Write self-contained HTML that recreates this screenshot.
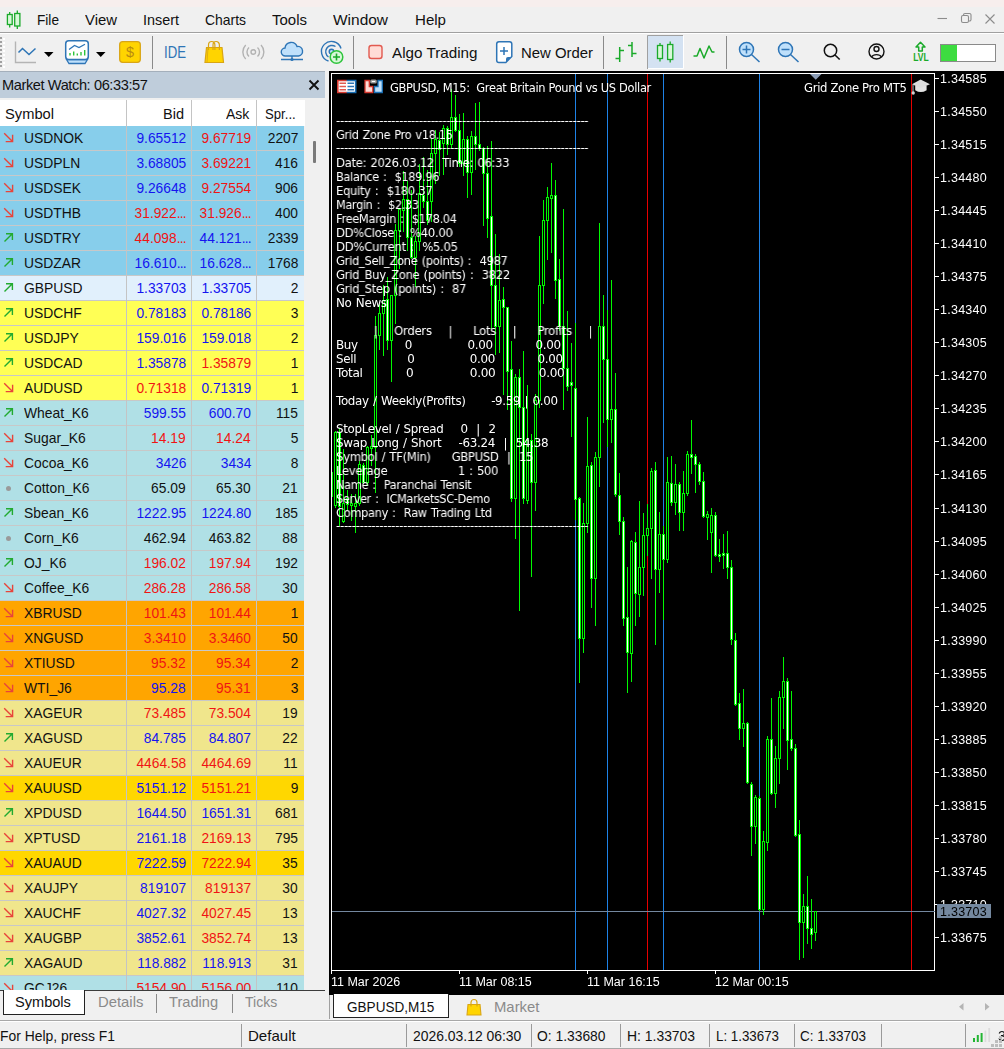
<!DOCTYPE html>
<html><head><meta charset="utf-8"><title>MetaTrader 5</title>
<style>
*{box-sizing:border-box;margin:0;padding:0}
html,body{width:1004px;height:1049px;overflow:hidden;background:#f0f0f0;font-family:"Liberation Sans",sans-serif;color:#000}
.a{position:absolute}
.t{position:absolute;white-space:nowrap;font-size:14.5px;letter-spacing:-0.4px;line-height:20px;color:#111}
#top{left:0;top:0;width:1004px;height:7px;background:#f7eeed}
#menusep{left:0;top:32px;width:1004px;height:1px;background:#a0a0a0}
#menusep2{left:0;top:33px;width:1004px;height:1px;background:#fff}
.mi{top:10px;font-size:15px;letter-spacing:0}
.vsep{position:absolute;width:1px;background:#8a8a8a}
#mwh{left:0;top:71px;width:325px;height:27px;background:#bfcddb;border-top:1px solid #a4afbb}
#mwhead{left:0;top:100px;width:305px;height:26px;background:#fff}
#mw{left:0;top:126px;width:304px;height:864px;overflow:hidden;background:#fff}
.r{position:absolute;left:0;width:304px;height:25px;font-size:15px;line-height:24px;border-bottom:1px solid #c8c8c8}
.r span{position:absolute;top:0;white-space:nowrap}
.r .s{left:24px;color:#111;transform:scaleX(.925);transform-origin:0 0}
.r .b{right:118px;text-align:right;transform:scaleX(.918);transform-origin:100% 0}
.r .k{right:53px;text-align:right;transform:scaleX(.918);transform-origin:100% 0}
.r .p{right:6px;text-align:right;color:#111;transform:scaleX(.918);transform-origin:100% 0}
.r i{font-style:normal;letter-spacing:-0.9px}
.cl{position:absolute;top:0;width:1px;height:100%;background:#c4c4c4}
.blue{color:#1414f0}.red{color:#f01414}.blk{color:#111}

#chart{left:329px;top:71px;width:675px;height:924px;background:#000;overflow:hidden}
#chart .ct,#chart .pa,#chart .ta{will-change:transform}
.ct{position:absolute;white-space:pre;color:#fff;font-family:"DejaVu Sans","Liberation Sans",sans-serif;font-size:11.850px;line-height:14px;letter-spacing:-0.320px;word-spacing:0.800px}
.pa{position:absolute;left:611px;color:#fff;font-family:"Liberation Sans",sans-serif;font-size:12.500px;line-height:14px;white-space:nowrap;letter-spacing:0.250px}
  .ta{position:absolute;top:904px;color:#fff;font-family:"Liberation Sans",sans-serif;font-size:12.500px;line-height:14px;white-space:nowrap}

.tab{position:absolute;font-size:15px;line-height:20px;white-space:nowrap}
</style></head>
<body>
<div id="top" class="a"></div>
<div class="t mi" style="left:36.5px;top:10px;;transform:scaleX(0.9101);transform-origin:0 0">File</div>
<div class="t mi" style="left:85px;top:10px;;transform:scaleX(0.9922);transform-origin:0 0">View</div>
<div class="t mi" style="left:143px;top:10px;;transform:scaleX(0.9596);transform-origin:0 0">Insert</div>
<div class="t mi" style="left:205px;top:10px;;transform:scaleX(0.9279);transform-origin:0 0">Charts</div>
<div class="t mi" style="left:272px;top:10px;;transform:scaleX(0.9991);transform-origin:0 0">Tools</div>
<div class="t mi" style="left:333px;top:10px;;transform:scaleX(1.0307);transform-origin:0 0">Window</div>
<div class="t mi" style="left:414.5px;top:10px;;transform:scaleX(1.0046);transform-origin:0 0">Help</div>
<div id="menusep" class="a"></div><div id="menusep2" class="a"></div>
<div id="mwh" class="a"></div>
<div class="t" style="left:2px;top:75px;;transform:scaleX(1.0062);transform-origin:0 0">Market Watch: 06:33:57</div>
<div id="mwhead" class="a"></div>
<div class="t mi" style="left:5px;top:104px;;transform:scaleX(0.9794);transform-origin:0 0">Symbol</div>
<div class="t mi" style="left:162.5px;top:104px;;transform:scaleX(0.9683);transform-origin:0 0">Bid</div>
<div class="t mi" style="left:226.2px;top:104px;;transform:scaleX(0.9354);transform-origin:0 0">Ask</div>
<div class="t mi" style="left:265.3px;top:104px;;transform:scaleX(0.8764);transform-origin:0 0">Spr...</div>
<div class="a" style="left:126px;top:100px;width:1px;height:26px;background:#c4c4c4"></div>
<div class="a" style="left:191px;top:100px;width:1px;height:26px;background:#c4c4c4"></div>
<div class="a" style="left:256px;top:100px;width:1px;height:26px;background:#c4c4c4"></div>
<div id="mw" class="a">
<div class="r" style="top:0px;background:#87ceeb"><svg class="a" style="left:3px;top:6px" width="12" height="12" viewBox="0 0 12 12"><path d="M1.200 1.200L9.500 9.500M2.700 9.600H9.600V2.700" fill="none" stroke="#e8443a" stroke-width="1.400"/></svg><span class="s">USDNOK</span><span class="b blue">9.65512</span><span class="k red">9.67719</span><span class="p">2207</span></div>
<div class="r" style="top:25px;background:#87ceeb"><svg class="a" style="left:3px;top:6px" width="12" height="12" viewBox="0 0 12 12"><path d="M1.200 1.200L9.500 9.500M2.700 9.600H9.600V2.700" fill="none" stroke="#e8443a" stroke-width="1.400"/></svg><span class="s">USDPLN</span><span class="b blue">3.68805</span><span class="k red">3.69221</span><span class="p">416</span></div>
<div class="r" style="top:50px;background:#87ceeb"><svg class="a" style="left:3px;top:6px" width="12" height="12" viewBox="0 0 12 12"><path d="M1.200 1.200L9.500 9.500M2.700 9.600H9.600V2.700" fill="none" stroke="#e8443a" stroke-width="1.400"/></svg><span class="s">USDSEK</span><span class="b blue">9.26648</span><span class="k red">9.27554</span><span class="p">906</span></div>
<div class="r" style="top:75px;background:#87ceeb"><svg class="a" style="left:3px;top:6px" width="12" height="12" viewBox="0 0 12 12"><path d="M1.200 1.200L9.500 9.500M2.700 9.600H9.600V2.700" fill="none" stroke="#e8443a" stroke-width="1.400"/></svg><span class="s">USDTHB</span><span class="b red">31.922<i>...</i></span><span class="k red">31.926<i>...</i></span><span class="p">400</span></div>
<div class="r" style="top:100px;background:#87ceeb"><svg class="a" style="left:3px;top:6px" width="12" height="12" viewBox="0 0 12 12"><path d="M1.500 9.500L9.300 1.700M3 1.700H9.400V8" fill="none" stroke="#22aa30" stroke-width="1.400"/></svg><span class="s">USDTRY</span><span class="b red">44.098<i>...</i></span><span class="k blue">44.121<i>...</i></span><span class="p">2339</span></div>
<div class="r" style="top:125px;background:#87ceeb"><svg class="a" style="left:3px;top:6px" width="12" height="12" viewBox="0 0 12 12"><path d="M1.500 9.500L9.300 1.700M3 1.700H9.400V8" fill="none" stroke="#22aa30" stroke-width="1.400"/></svg><span class="s">USDZAR</span><span class="b blue">16.610<i>...</i></span><span class="k blue">16.628<i>...</i></span><span class="p">1768</span></div>
<div class="r" style="top:150px;background:#e1f0fc"><svg class="a" style="left:3px;top:6px" width="12" height="12" viewBox="0 0 12 12"><path d="M1.500 9.500L9.300 1.700M3 1.700H9.400V8" fill="none" stroke="#22aa30" stroke-width="1.400"/></svg><span class="s">GBPUSD</span><span class="b blue">1.33703</span><span class="k blue">1.33705</span><span class="p">2</span></div>
<div class="r" style="top:175px;background:#ffff55"><svg class="a" style="left:3px;top:6px" width="12" height="12" viewBox="0 0 12 12"><path d="M1.500 9.500L9.300 1.700M3 1.700H9.400V8" fill="none" stroke="#22aa30" stroke-width="1.400"/></svg><span class="s">USDCHF</span><span class="b blue">0.78183</span><span class="k blue">0.78186</span><span class="p">3</span></div>
<div class="r" style="top:200px;background:#ffff55"><svg class="a" style="left:3px;top:6px" width="12" height="12" viewBox="0 0 12 12"><path d="M1.500 9.500L9.300 1.700M3 1.700H9.400V8" fill="none" stroke="#22aa30" stroke-width="1.400"/></svg><span class="s">USDJPY</span><span class="b blue">159.016</span><span class="k blue">159.018</span><span class="p">2</span></div>
<div class="r" style="top:225px;background:#ffff55"><svg class="a" style="left:3px;top:6px" width="12" height="12" viewBox="0 0 12 12"><path d="M1.500 9.500L9.300 1.700M3 1.700H9.400V8" fill="none" stroke="#22aa30" stroke-width="1.400"/></svg><span class="s">USDCAD</span><span class="b blue">1.35878</span><span class="k red">1.35879</span><span class="p">1</span></div>
<div class="r" style="top:250px;background:#ffff55"><svg class="a" style="left:3px;top:6px" width="12" height="12" viewBox="0 0 12 12"><path d="M1.200 1.200L9.500 9.500M2.700 9.600H9.600V2.700" fill="none" stroke="#e8443a" stroke-width="1.400"/></svg><span class="s">AUDUSD</span><span class="b red">0.71318</span><span class="k blue">0.71319</span><span class="p">1</span></div>
<div class="r" style="top:275px;background:#b0e0e6"><svg class="a" style="left:3px;top:6px" width="12" height="12" viewBox="0 0 12 12"><path d="M1.500 9.500L9.300 1.700M3 1.700H9.400V8" fill="none" stroke="#22aa30" stroke-width="1.400"/></svg><span class="s">Wheat_K6</span><span class="b blue">599.55</span><span class="k blue">600.70</span><span class="p">115</span></div>
<div class="r" style="top:300px;background:#b0e0e6"><svg class="a" style="left:3px;top:6px" width="12" height="12" viewBox="0 0 12 12"><path d="M1.200 1.200L9.500 9.500M2.700 9.600H9.600V2.700" fill="none" stroke="#e8443a" stroke-width="1.400"/></svg><span class="s">Sugar_K6</span><span class="b red">14.19</span><span class="k red">14.24</span><span class="p">5</span></div>
<div class="r" style="top:325px;background:#b0e0e6"><svg class="a" style="left:3px;top:6px" width="12" height="12" viewBox="0 0 12 12"><path d="M1.200 1.200L9.500 9.500M2.700 9.600H9.600V2.700" fill="none" stroke="#e8443a" stroke-width="1.400"/></svg><span class="s">Cocoa_K6</span><span class="b blue">3426</span><span class="k blue">3434</span><span class="p">8</span></div>
<div class="r" style="top:350px;background:#b0e0e6"><div class="a" style="left:6px;top:10px;width:5px;height:5px;border-radius:3px;background:#9a9a9a"></div><span class="s">Cotton_K6</span><span class="b blk">65.09</span><span class="k blk">65.30</span><span class="p">21</span></div>
<div class="r" style="top:375px;background:#b0e0e6"><svg class="a" style="left:3px;top:6px" width="12" height="12" viewBox="0 0 12 12"><path d="M1.500 9.500L9.300 1.700M3 1.700H9.400V8" fill="none" stroke="#22aa30" stroke-width="1.400"/></svg><span class="s">Sbean_K6</span><span class="b blue">1222.95</span><span class="k blue">1224.80</span><span class="p">185</span></div>
<div class="r" style="top:400px;background:#b0e0e6"><div class="a" style="left:6px;top:10px;width:5px;height:5px;border-radius:3px;background:#9a9a9a"></div><span class="s">Corn_K6</span><span class="b blk">462.94</span><span class="k blk">463.82</span><span class="p">88</span></div>
<div class="r" style="top:425px;background:#b0e0e6"><svg class="a" style="left:3px;top:6px" width="12" height="12" viewBox="0 0 12 12"><path d="M1.500 9.500L9.300 1.700M3 1.700H9.400V8" fill="none" stroke="#22aa30" stroke-width="1.400"/></svg><span class="s">OJ_K6</span><span class="b red">196.02</span><span class="k red">197.94</span><span class="p">192</span></div>
<div class="r" style="top:450px;background:#b0e0e6"><svg class="a" style="left:3px;top:6px" width="12" height="12" viewBox="0 0 12 12"><path d="M1.200 1.200L9.500 9.500M2.700 9.600H9.600V2.700" fill="none" stroke="#e8443a" stroke-width="1.400"/></svg><span class="s">Coffee_K6</span><span class="b red">286.28</span><span class="k red">286.58</span><span class="p">30</span></div>
<div class="r" style="top:475px;background:#ffa500"><svg class="a" style="left:3px;top:6px" width="12" height="12" viewBox="0 0 12 12"><path d="M1.200 1.200L9.500 9.500M2.700 9.600H9.600V2.700" fill="none" stroke="#e8443a" stroke-width="1.400"/></svg><span class="s">XBRUSD</span><span class="b red">101.43</span><span class="k red">101.44</span><span class="p">1</span></div>
<div class="r" style="top:500px;background:#ffa500"><svg class="a" style="left:3px;top:6px" width="12" height="12" viewBox="0 0 12 12"><path d="M1.200 1.200L9.500 9.500M2.700 9.600H9.600V2.700" fill="none" stroke="#e8443a" stroke-width="1.400"/></svg><span class="s">XNGUSD</span><span class="b red">3.3410</span><span class="k red">3.3460</span><span class="p">50</span></div>
<div class="r" style="top:525px;background:#ffa500"><svg class="a" style="left:3px;top:6px" width="12" height="12" viewBox="0 0 12 12"><path d="M1.200 1.200L9.500 9.500M2.700 9.600H9.600V2.700" fill="none" stroke="#e8443a" stroke-width="1.400"/></svg><span class="s">XTIUSD</span><span class="b red">95.32</span><span class="k red">95.34</span><span class="p">2</span></div>
<div class="r" style="top:550px;background:#ffa500"><svg class="a" style="left:3px;top:6px" width="12" height="12" viewBox="0 0 12 12"><path d="M1.200 1.200L9.500 9.500M2.700 9.600H9.600V2.700" fill="none" stroke="#e8443a" stroke-width="1.400"/></svg><span class="s">WTI_J6</span><span class="b blue">95.28</span><span class="k red">95.31</span><span class="p">3</span></div>
<div class="r" style="top:575px;background:#f0e68c"><svg class="a" style="left:3px;top:6px" width="12" height="12" viewBox="0 0 12 12"><path d="M1.200 1.200L9.500 9.500M2.700 9.600H9.600V2.700" fill="none" stroke="#e8443a" stroke-width="1.400"/></svg><span class="s">XAGEUR</span><span class="b red">73.485</span><span class="k red">73.504</span><span class="p">19</span></div>
<div class="r" style="top:600px;background:#f0e68c"><svg class="a" style="left:3px;top:6px" width="12" height="12" viewBox="0 0 12 12"><path d="M1.500 9.500L9.300 1.700M3 1.700H9.400V8" fill="none" stroke="#22aa30" stroke-width="1.400"/></svg><span class="s">XAGUSD</span><span class="b blue">84.785</span><span class="k blue">84.807</span><span class="p">22</span></div>
<div class="r" style="top:625px;background:#f0e68c"><svg class="a" style="left:3px;top:6px" width="12" height="12" viewBox="0 0 12 12"><path d="M1.200 1.200L9.500 9.500M2.700 9.600H9.600V2.700" fill="none" stroke="#e8443a" stroke-width="1.400"/></svg><span class="s">XAUEUR</span><span class="b red">4464.58</span><span class="k red">4464.69</span><span class="p">11</span></div>
<div class="r" style="top:650px;background:#ffd700"><svg class="a" style="left:3px;top:6px" width="12" height="12" viewBox="0 0 12 12"><path d="M1.200 1.200L9.500 9.500M2.700 9.600H9.600V2.700" fill="none" stroke="#e8443a" stroke-width="1.400"/></svg><span class="s">XAUUSD</span><span class="b blue">5151.12</span><span class="k red">5151.21</span><span class="p">9</span></div>
<div class="r" style="top:675px;background:#f0e68c"><svg class="a" style="left:3px;top:6px" width="12" height="12" viewBox="0 0 12 12"><path d="M1.500 9.500L9.300 1.700M3 1.700H9.400V8" fill="none" stroke="#22aa30" stroke-width="1.400"/></svg><span class="s">XPDUSD</span><span class="b blue">1644.50</span><span class="k blue">1651.31</span><span class="p">681</span></div>
<div class="r" style="top:700px;background:#f0e68c"><svg class="a" style="left:3px;top:6px" width="12" height="12" viewBox="0 0 12 12"><path d="M1.200 1.200L9.500 9.500M2.700 9.600H9.600V2.700" fill="none" stroke="#e8443a" stroke-width="1.400"/></svg><span class="s">XPTUSD</span><span class="b blue">2161.18</span><span class="k red">2169.13</span><span class="p">795</span></div>
<div class="r" style="top:725px;background:#ffd700"><svg class="a" style="left:3px;top:6px" width="12" height="12" viewBox="0 0 12 12"><path d="M1.200 1.200L9.500 9.500M2.700 9.600H9.600V2.700" fill="none" stroke="#e8443a" stroke-width="1.400"/></svg><span class="s">XAUAUD</span><span class="b blue">7222.59</span><span class="k red">7222.94</span><span class="p">35</span></div>
<div class="r" style="top:750px;background:#f0e68c"><svg class="a" style="left:3px;top:6px" width="12" height="12" viewBox="0 0 12 12"><path d="M1.200 1.200L9.500 9.500M2.700 9.600H9.600V2.700" fill="none" stroke="#e8443a" stroke-width="1.400"/></svg><span class="s">XAUJPY</span><span class="b blue">819107</span><span class="k red">819137</span><span class="p">30</span></div>
<div class="r" style="top:775px;background:#f0e68c"><svg class="a" style="left:3px;top:6px" width="12" height="12" viewBox="0 0 12 12"><path d="M1.200 1.200L9.500 9.500M2.700 9.600H9.600V2.700" fill="none" stroke="#e8443a" stroke-width="1.400"/></svg><span class="s">XAUCHF</span><span class="b blue">4027.32</span><span class="k red">4027.45</span><span class="p">13</span></div>
<div class="r" style="top:800px;background:#f0e68c"><svg class="a" style="left:3px;top:6px" width="12" height="12" viewBox="0 0 12 12"><path d="M1.200 1.200L9.500 9.500M2.700 9.600H9.600V2.700" fill="none" stroke="#e8443a" stroke-width="1.400"/></svg><span class="s">XAUGBP</span><span class="b blue">3852.61</span><span class="k red">3852.74</span><span class="p">13</span></div>
<div class="r" style="top:825px;background:#f0e68c"><svg class="a" style="left:3px;top:6px" width="12" height="12" viewBox="0 0 12 12"><path d="M1.500 9.500L9.300 1.700M3 1.700H9.400V8" fill="none" stroke="#22aa30" stroke-width="1.400"/></svg><span class="s">XAGAUD</span><span class="b blue">118.882</span><span class="k blue">118.913</span><span class="p">31</span></div>
<div class="r" style="top:850px;background:#b0e0e6"><svg class="a" style="left:3px;top:6px" width="12" height="12" viewBox="0 0 12 12"><path d="M1.200 1.200L9.500 9.500M2.700 9.600H9.600V2.700" fill="none" stroke="#e8443a" stroke-width="1.400"/></svg><span class="s">GCJ26</span><span class="b red">5154.90</span><span class="k red">5156.00</span><span class="p">110</span></div>
<div class="cl" style="left:126px"></div>
<div class="cl" style="left:191px"></div>
<div class="cl" style="left:256px"></div>
</div>
<div class="a" style="left:313px;top:141px;width:3px;height:22px;background:#7a7a7a;border-radius:1px"></div>
<svg class="a" style="left:0;top:0" width="1004" height="71" viewBox="0 0 1004 71"><g fill="#d8f8d8" stroke="#1aaa2a" stroke-width="1.3"><path d="M9.7 12v2.5M9.7 24.5v3M17.3 10.5v3M17.3 26v3" fill="none"/><rect x="7.4" y="14.5" width="4.8" height="10"/><rect x="14.7" y="13.5" width="5.2" height="12.5"/></g><g fill="none" stroke="#8c8c8c" stroke-width="1.1"><path d="M937.5 18.5h9.5"/><rect x="961.5" y="15.5" width="7" height="7" rx="1.5"/><path d="M963.5 15.5v-0.5a1.5 1.5 0 0 1 1.5-1.500h4.500a1.500 1.500 0 0 1 1.500 1.500v4.500a1.500 1.500 0 0 1-1.500 1.500h-0.500"/><path d="M985.500 14.500l9 9M994.500 14.500l-9 9"/></g><rect x="0" y="37" width="2" height="2" fill="#a0a0a0"/><rect x="3" y="38" width="2" height="2" fill="#fff"/><rect x="0" y="41" width="2" height="2" fill="#a0a0a0"/><rect x="3" y="42" width="2" height="2" fill="#fff"/><rect x="0" y="45" width="2" height="2" fill="#a0a0a0"/><rect x="3" y="46" width="2" height="2" fill="#fff"/><rect x="0" y="49" width="2" height="2" fill="#a0a0a0"/><rect x="3" y="50" width="2" height="2" fill="#fff"/><rect x="0" y="53" width="2" height="2" fill="#a0a0a0"/><rect x="3" y="54" width="2" height="2" fill="#fff"/><rect x="0" y="57" width="2" height="2" fill="#a0a0a0"/><rect x="3" y="58" width="2" height="2" fill="#fff"/><rect x="0" y="61" width="2" height="2" fill="#a0a0a0"/><rect x="3" y="62" width="2" height="2" fill="#fff"/><rect x="0" y="65" width="2" height="2" fill="#a0a0a0"/><rect x="3" y="66" width="2" height="2" fill="#fff"/><path d="M15.500 41.500V62.500H36" fill="none" stroke="#b4b4b4" stroke-width="1.4"/><path d="M18.500 52.500L22.500 48.500L29 54.500L35.500 48.500" fill="none" stroke="#2e75b6" stroke-width="1.5"/><path d="M44 52h9.500l-4.750 5z" fill="#000"/><path d="M68.500 59.500h17l2 -0l-2.500 4h-16l-2.500-4z" fill="#bfe0fb" stroke="#2e75b6" stroke-width="1.300"/><rect x="65.700" y="40.700" width="22.600" height="18.800" rx="3" fill="#fff" stroke="#2e75b6" stroke-width="1.500"/><path d="M69 49.500L74.500 45.500L79 47.500L85 44.300" fill="none" stroke="#2e75b6" stroke-width="1.300"/><path d="M70 55.500v-2.500M73.700 55.500v-4M77.300 55.500v-2M81 55.500v-3.500M84.700 55.500v-5.500" stroke="#2ec43c" stroke-width="1.400"/><path d="M96 52h9.500l-4.750 5z" fill="#000"/><rect x="119.700" y="41.700" width="20.600" height="20.600" rx="3" fill="#ffd400" stroke="#d9a514" stroke-width="1.300"/><text x="130" y="57" font-size="14.500" font-family="Liberation Sans, sans-serif" fill="#b98a10" text-anchor="middle">$</text><rect x="152" y="36" width="1" height="33" fill="#8a8a8a"/><rect x="353" y="36" width="1" height="33" fill="#8a8a8a"/><rect x="603" y="36" width="1" height="33" fill="#8a8a8a"/><rect x="726" y="36" width="1" height="33" fill="#8a8a8a"/><text x="164" y="58" font-size="16.500" font-family="Liberation Sans, sans-serif" fill="#2e75b6" textLength="22" lengthAdjust="spacingAndGlyphs">IDE</text><g stroke="#d9a514" stroke-width="1.200"><path d="M206.500 47.500h15.500l1.500 15h-18.500z" fill="#ffd400"/><path d="M208 47.500l-1 15" fill="none" stroke-width="0.800"/><path d="M208.500 50v-5a3.200 3.500 0 0 1 6.400 0v5M213 50v-5a3.200 3.500 0 0 1 6.400 0v5" fill="none"/></g><g fill="none" stroke="#b2b2b2" stroke-width="1.400"><circle cx="253.300" cy="52" r="2.300"/><path d="M249 47.500a6 6 0 0 0 0 9M257.500 47.500a6 6 0 0 1 0 9M245.700 45a10 10 0 0 0 0 14M261 45a10 10 0 0 1 0 14"/></g><path d="M285.500 56a4 4 0 0 1 -0.500 -8a6.200 6.200 0 0 1 12 -1.500a4.800 4.800 0 0 1 1.500 9.500z" fill="#bfe0fb" stroke="#2e75b6" stroke-width="1.400"/><path d="M292 56v3.500M281 59.500h22" fill="none" stroke="#2e75b6" stroke-width="1.400"/><circle cx="292" cy="59.500" r="1.600" fill="#2e75b6"/><g fill="none" stroke="#2e75b6" stroke-width="1.400"><circle cx="331.500" cy="51.500" r="2.300" fill="#bfe0fb"/><path d="M335.500 46.500a6.300 6.300 0 1 0 -7 10.500"/><path d="M341 48.500a10 10 0 1 0 -12.500 12.500"/></g><circle cx="336.500" cy="57" r="6.300" fill="#d8f8d8" stroke="#2ec43c" stroke-width="1.500"/><path d="M333 57h7M336.500 53.500v7" stroke="#1aaa2a" stroke-width="1.600"/><rect x="369" y="45.500" width="13" height="13" rx="2.500" fill="#ffdcd6" stroke="#e25a50" stroke-width="1.400"/><path d="M499 41.700h10.500a2.300 2.300 0 0 1 2.300 2.300v12.500l-6 6h-6.800a2.300 2.300 0 0 1 -2.300 -2.300v-16.200a2.300 2.300 0 0 1 2.300 -2.300z" fill="#fff" stroke="#2e75b6" stroke-width="1.500"/><path d="M511.500 57l-5.500 5.500v-3.500a2 2 0 0 1 2-2z" fill="#2e75b6"/><path d="M500 51h8M504 47v8" stroke="#2e75b6" stroke-width="1.500"/><path d="M619.700 47v15M615.500 58.500h4M620 50.500h4M632 42v15M628 45.500h4M632 53.500h4.500" fill="none" stroke="#1aaa2a" stroke-width="1.500"/><rect x="647" y="35" width="36" height="34" fill="#d4e2f2"/><path d="M647.500 69V35.500H683" fill="none" stroke="#a0a0a0" stroke-width="1"/><path d="M683.500 35.500V68.500H648" fill="none" stroke="#fff" stroke-width="1"/><g fill="#d8f8d8" stroke="#1aaa2a" stroke-width="1.300"><path d="M660 43v2.500M660 58.500v3M670.200 41.500v3M670.200 59.500v3" fill="none"/><rect x="657.500" y="45.500" width="5" height="13"/><rect x="667.600" y="44.500" width="5.200" height="15"/></g><path d="M693.500 56H697L700 48.500L704 58L709 46L712 52H714.500" fill="none" stroke="#1aaa2a" stroke-width="1.500" stroke-linejoin="round"/><circle cx="746.5" cy="49.500" r="7" fill="#bfe0fb" stroke="#2e75b6" stroke-width="1.500"/><path d="M751.5 54.500l8 7.500" stroke="#2e75b6" stroke-width="1.500"/><path d="M742.5 49.500h8M746.5 45.500v8" stroke="#2e75b6" stroke-width="1.500"/><circle cx="785.5" cy="49.500" r="7" fill="#bfe0fb" stroke="#2e75b6" stroke-width="1.500"/><path d="M790.5 54.500l8 7.500" stroke="#2e75b6" stroke-width="1.500"/><path d="M781.5 49.500h8" stroke="#2e75b6" stroke-width="1.500"/><circle cx="830.500" cy="50.500" r="6.200" fill="none" stroke="#111" stroke-width="1.500"/><path d="M835 55l4.700 4.500" stroke="#111" stroke-width="1.600"/><g fill="none" stroke="#111" stroke-width="1.400"><circle cx="876.500" cy="51.500" r="7.500"/><circle cx="876.500" cy="49" r="2.500"/><path d="M871.500 57a5.500 4 0 0 1 10 0"/></g><path d="M920.500 42.300l4.500 4.700h-2.700v4h-3.600v-4h-2.700z" fill="none" stroke="#1aaa2a" stroke-width="1.500" stroke-linejoin="round"/><text x="913.200" y="61.300" font-size="10.300" font-weight="bold" font-family="Liberation Sans, sans-serif" fill="#1aaa2a" textLength="15.500" lengthAdjust="spacingAndGlyphs">LVL</text><rect x="940.500" y="44.500" width="55" height="17" fill="#fff" stroke="#8a8a8a" stroke-width="1"/><rect x="941" y="45" width="16" height="16" fill="#3ddc40"/></svg>
<div class="t mi" style="left:392px;top:43px;;transform:scaleX(1.0150);transform-origin:0 0">Algo Trading</div>
<div class="t mi" style="left:521px;top:43px;;transform:scaleX(0.9927);transform-origin:0 0">New Order</div>
<svg class="a" style="left:307px;top:78px" width="14" height="14" viewBox="0 0 14 14"><path d="M2.500 2.500l9 9M11.500 2.500l-9 9" stroke="#111" stroke-width="1.900"/></svg>
<div id="chart" class="a">
<svg class="a" style="left:0;top:0" width="675" height="924" viewBox="329 71 675 924" shape-rendering="crispEdges"><path d="M331.500 974V73.500H934.500V970.500H331.500" fill="none" stroke="#fff" stroke-width="1"/><rect x="575" y="74" width="1" height="896" fill="#1e82e6"/><rect x="607" y="74" width="1" height="896" fill="#1e82e6"/><rect x="663" y="74" width="1" height="896" fill="#1e82e6"/><rect x="759" y="74" width="1" height="896" fill="#1e82e6"/><rect x="647" y="74" width="1" height="896" fill="#e60000"/><rect x="911" y="74" width="1" height="896" fill="#e60000"/><rect x="332" y="911" width="603" height="1" fill="#74889f"/><rect x="935" y="78" width="4" height="1" fill="#fff"/><rect x="935" y="111" width="4" height="1" fill="#fff"/><rect x="935" y="144" width="4" height="1" fill="#fff"/><rect x="935" y="177" width="4" height="1" fill="#fff"/><rect x="935" y="210" width="4" height="1" fill="#fff"/><rect x="935" y="243" width="4" height="1" fill="#fff"/><rect x="935" y="276" width="4" height="1" fill="#fff"/><rect x="935" y="309" width="4" height="1" fill="#fff"/><rect x="935" y="342" width="4" height="1" fill="#fff"/><rect x="935" y="375" width="4" height="1" fill="#fff"/><rect x="935" y="408" width="4" height="1" fill="#fff"/><rect x="935" y="441" width="4" height="1" fill="#fff"/><rect x="935" y="474" width="4" height="1" fill="#fff"/><rect x="935" y="508" width="4" height="1" fill="#fff"/><rect x="935" y="541" width="4" height="1" fill="#fff"/><rect x="935" y="574" width="4" height="1" fill="#fff"/><rect x="935" y="607" width="4" height="1" fill="#fff"/><rect x="935" y="640" width="4" height="1" fill="#fff"/><rect x="935" y="673" width="4" height="1" fill="#fff"/><rect x="935" y="706" width="4" height="1" fill="#fff"/><rect x="935" y="739" width="4" height="1" fill="#fff"/><rect x="935" y="772" width="4" height="1" fill="#fff"/><rect x="935" y="805" width="4" height="1" fill="#fff"/><rect x="935" y="838" width="4" height="1" fill="#fff"/><rect x="935" y="871" width="4" height="1" fill="#fff"/><rect x="935" y="904" width="4" height="1" fill="#fff"/><rect x="935" y="937" width="4" height="1" fill="#fff"/><rect x="459" y="971" width="1" height="3" fill="#fff"/><rect x="587" y="971" width="1" height="3" fill="#fff"/><rect x="715" y="971" width="1" height="3" fill="#fff"/><rect x="332" y="472" width="1" height="25" fill="#00f800"/><rect x="335" y="431" width="1" height="77" fill="#00f800"/><rect x="334" y="432" width="3" height="74" fill="#00f800"/><rect x="335" y="433" width="1" height="72" fill="#000"/><rect x="339" y="428" width="1" height="98" fill="#00f800"/><rect x="338" y="432" width="3" height="75" fill="#00f800"/><rect x="339" y="433" width="1" height="73" fill="#fff"/><rect x="343" y="449" width="1" height="74" fill="#00f800"/><rect x="342" y="503" width="3" height="19" fill="#00f800"/><rect x="343" y="504" width="1" height="17" fill="#000"/><rect x="347" y="490" width="1" height="20" fill="#00f800"/><rect x="346" y="498" width="3" height="7" fill="#00f800"/><rect x="347" y="499" width="1" height="5" fill="#fff"/><rect x="351" y="494" width="1" height="27" fill="#00f800"/><rect x="350" y="503" width="3" height="3" fill="#00f800"/><rect x="351" y="504" width="1" height="1" fill="#000"/><rect x="355" y="494" width="1" height="39" fill="#00f800"/><rect x="354" y="503" width="3" height="4" fill="#00f800"/><rect x="355" y="504" width="1" height="2" fill="#000"/><rect x="359" y="461" width="1" height="45" fill="#00f800"/><rect x="358" y="464" width="3" height="40" fill="#00f800"/><rect x="359" y="465" width="1" height="38" fill="#000"/><rect x="363" y="463" width="1" height="21" fill="#00f800"/><rect x="362" y="465" width="3" height="18" fill="#00f800"/><rect x="363" y="466" width="1" height="16" fill="#fff"/><rect x="367" y="446" width="1" height="40" fill="#00f800"/><rect x="366" y="447" width="3" height="36" fill="#00f800"/><rect x="367" y="448" width="1" height="34" fill="#000"/><rect x="371" y="435" width="1" height="31" fill="#00f800"/><rect x="370" y="446" width="3" height="3" fill="#00f800"/><rect x="371" y="447" width="1" height="1" fill="#000"/><rect x="375" y="316" width="1" height="177" fill="#00f800"/><rect x="374" y="335" width="3" height="113" fill="#00f800"/><rect x="375" y="336" width="1" height="111" fill="#000"/><rect x="379" y="304" width="1" height="46" fill="#00f800"/><rect x="378" y="313" width="3" height="23" fill="#00f800"/><rect x="379" y="314" width="1" height="21" fill="#000"/><rect x="383" y="285" width="1" height="71" fill="#00f800"/><rect x="382" y="300" width="3" height="14" fill="#00f800"/><rect x="383" y="301" width="1" height="12" fill="#000"/><rect x="387" y="277" width="1" height="73" fill="#00f800"/><rect x="386" y="299" width="3" height="42" fill="#00f800"/><rect x="387" y="300" width="1" height="40" fill="#fff"/><rect x="391" y="295" width="1" height="87" fill="#00f800"/><rect x="390" y="295" width="3" height="46" fill="#00f800"/><rect x="391" y="296" width="1" height="44" fill="#000"/><rect x="395" y="224" width="1" height="100" fill="#00f800"/><rect x="394" y="230" width="3" height="66" fill="#00f800"/><rect x="395" y="231" width="1" height="64" fill="#000"/><rect x="399" y="208" width="1" height="61" fill="#00f800"/><rect x="398" y="209" width="3" height="22" fill="#00f800"/><rect x="399" y="210" width="1" height="20" fill="#000"/><rect x="403" y="171" width="1" height="61" fill="#00f800"/><rect x="402" y="199" width="3" height="12" fill="#00f800"/><rect x="403" y="200" width="1" height="10" fill="#000"/><rect x="407" y="181" width="1" height="70" fill="#00f800"/><rect x="406" y="199" width="3" height="39" fill="#00f800"/><rect x="407" y="200" width="1" height="37" fill="#fff"/><rect x="411" y="190" width="1" height="69" fill="#00f800"/><rect x="410" y="237" width="3" height="21" fill="#00f800"/><rect x="411" y="238" width="1" height="19" fill="#fff"/><rect x="415" y="236" width="1" height="51" fill="#00f800"/><rect x="414" y="241" width="3" height="17" fill="#00f800"/><rect x="415" y="242" width="1" height="15" fill="#000"/><rect x="419" y="164" width="1" height="87" fill="#00f800"/><rect x="418" y="193" width="3" height="49" fill="#00f800"/><rect x="419" y="194" width="1" height="47" fill="#000"/><rect x="423" y="157" width="1" height="51" fill="#00f800"/><rect x="422" y="195" width="3" height="7" fill="#00f800"/><rect x="423" y="196" width="1" height="5" fill="#fff"/><rect x="427" y="170" width="1" height="55" fill="#00f800"/><rect x="426" y="201" width="3" height="20" fill="#00f800"/><rect x="427" y="202" width="1" height="18" fill="#fff"/><rect x="431" y="138" width="1" height="84" fill="#00f800"/><rect x="430" y="153" width="3" height="49" fill="#00f800"/><rect x="431" y="154" width="1" height="47" fill="#000"/><rect x="435" y="130" width="1" height="54" fill="#00f800"/><rect x="434" y="139" width="3" height="15" fill="#00f800"/><rect x="435" y="140" width="1" height="13" fill="#000"/><rect x="439" y="132" width="1" height="44" fill="#00f800"/><rect x="438" y="140" width="3" height="10" fill="#00f800"/><rect x="439" y="141" width="1" height="8" fill="#fff"/><rect x="443" y="125" width="1" height="50" fill="#00f800"/><rect x="442" y="128" width="3" height="16" fill="#00f800"/><rect x="443" y="129" width="1" height="14" fill="#000"/><rect x="447" y="126" width="1" height="29" fill="#00f800"/><rect x="446" y="128" width="3" height="17" fill="#00f800"/><rect x="447" y="129" width="1" height="15" fill="#fff"/><rect x="451" y="89" width="1" height="60" fill="#00f800"/><rect x="450" y="117" width="3" height="28" fill="#00f800"/><rect x="451" y="118" width="1" height="26" fill="#000"/><rect x="455" y="95" width="1" height="37" fill="#00f800"/><rect x="454" y="117" width="3" height="14" fill="#00f800"/><rect x="455" y="118" width="1" height="12" fill="#fff"/><rect x="459" y="114" width="1" height="53" fill="#00f800"/><rect x="458" y="130" width="3" height="34" fill="#00f800"/><rect x="459" y="131" width="1" height="32" fill="#fff"/><rect x="463" y="113" width="1" height="63" fill="#00f800"/><rect x="462" y="139" width="3" height="25" fill="#00f800"/><rect x="463" y="140" width="1" height="23" fill="#000"/><rect x="467" y="136" width="1" height="62" fill="#00f800"/><rect x="466" y="139" width="3" height="34" fill="#00f800"/><rect x="467" y="140" width="1" height="32" fill="#fff"/><rect x="471" y="131" width="1" height="64" fill="#00f800"/><rect x="470" y="136" width="3" height="37" fill="#00f800"/><rect x="471" y="137" width="1" height="35" fill="#000"/><rect x="475" y="103" width="1" height="67" fill="#00f800"/><rect x="474" y="136" width="3" height="9" fill="#00f800"/><rect x="475" y="137" width="1" height="7" fill="#fff"/><rect x="479" y="102" width="1" height="49" fill="#00f800"/><rect x="478" y="144" width="3" height="5" fill="#00f800"/><rect x="479" y="145" width="1" height="3" fill="#fff"/><rect x="483" y="147" width="1" height="79" fill="#00f800"/><rect x="482" y="148" width="3" height="26" fill="#00f800"/><rect x="483" y="149" width="1" height="24" fill="#fff"/><rect x="487" y="146" width="1" height="92" fill="#00f800"/><rect x="486" y="173" width="3" height="46" fill="#00f800"/><rect x="487" y="174" width="1" height="44" fill="#fff"/><rect x="491" y="141" width="1" height="188" fill="#00f800"/><rect x="490" y="216" width="3" height="70" fill="#00f800"/><rect x="491" y="217" width="1" height="68" fill="#fff"/><rect x="495" y="234" width="1" height="121" fill="#00f800"/><rect x="494" y="285" width="3" height="42" fill="#00f800"/><rect x="495" y="286" width="1" height="40" fill="#fff"/><rect x="499" y="254" width="1" height="99" fill="#00f800"/><rect x="498" y="300" width="3" height="27" fill="#00f800"/><rect x="499" y="301" width="1" height="25" fill="#000"/><rect x="503" y="287" width="1" height="108" fill="#00f800"/><rect x="502" y="299" width="3" height="9" fill="#00f800"/><rect x="503" y="300" width="1" height="7" fill="#fff"/><rect x="507" y="307" width="1" height="103" fill="#00f800"/><rect x="506" y="307" width="3" height="65" fill="#00f800"/><rect x="507" y="308" width="1" height="63" fill="#fff"/><rect x="511" y="341" width="1" height="161" fill="#00f800"/><rect x="510" y="369" width="3" height="130" fill="#00f800"/><rect x="511" y="370" width="1" height="128" fill="#fff"/><rect x="515" y="374" width="1" height="165" fill="#00f800"/><rect x="514" y="377" width="3" height="122" fill="#00f800"/><rect x="515" y="378" width="1" height="120" fill="#000"/><rect x="519" y="369" width="1" height="242" fill="#00f800"/><rect x="518" y="377" width="3" height="31" fill="#00f800"/><rect x="519" y="378" width="1" height="29" fill="#fff"/><rect x="523" y="351" width="1" height="153" fill="#00f800"/><rect x="522" y="407" width="3" height="92" fill="#00f800"/><rect x="523" y="408" width="1" height="90" fill="#fff"/><rect x="527" y="385" width="1" height="119" fill="#00f800"/><rect x="526" y="440" width="3" height="61" fill="#00f800"/><rect x="527" y="441" width="1" height="59" fill="#000"/><rect x="531" y="434" width="1" height="143" fill="#00f800"/><rect x="530" y="440" width="3" height="43" fill="#00f800"/><rect x="531" y="441" width="1" height="41" fill="#fff"/><rect x="535" y="394" width="1" height="117" fill="#00f800"/><rect x="534" y="400" width="3" height="83" fill="#00f800"/><rect x="535" y="401" width="1" height="81" fill="#000"/><rect x="539" y="236" width="1" height="172" fill="#00f800"/><rect x="538" y="285" width="3" height="116" fill="#00f800"/><rect x="539" y="286" width="1" height="114" fill="#000"/><rect x="543" y="200" width="1" height="104" fill="#00f800"/><rect x="542" y="220" width="3" height="66" fill="#00f800"/><rect x="543" y="221" width="1" height="64" fill="#000"/><rect x="547" y="187" width="1" height="73" fill="#00f800"/><rect x="546" y="197" width="3" height="24" fill="#00f800"/><rect x="547" y="198" width="1" height="22" fill="#000"/><rect x="551" y="163" width="1" height="90" fill="#00f800"/><rect x="550" y="195" width="3" height="4" fill="#00f800"/><rect x="551" y="196" width="1" height="2" fill="#000"/><rect x="555" y="180" width="1" height="119" fill="#00f800"/><rect x="554" y="195" width="3" height="86" fill="#00f800"/><rect x="555" y="196" width="1" height="84" fill="#fff"/><rect x="559" y="259" width="1" height="72" fill="#00f800"/><rect x="558" y="279" width="3" height="48" fill="#00f800"/><rect x="559" y="280" width="1" height="46" fill="#fff"/><rect x="563" y="209" width="1" height="201" fill="#00f800"/><rect x="562" y="326" width="3" height="43" fill="#00f800"/><rect x="563" y="327" width="1" height="41" fill="#fff"/><rect x="567" y="311" width="1" height="80" fill="#00f800"/><rect x="566" y="368" width="3" height="19" fill="#00f800"/><rect x="567" y="369" width="1" height="17" fill="#fff"/><rect x="571" y="343" width="1" height="94" fill="#00f800"/><rect x="570" y="382" width="3" height="4" fill="#00f800"/><rect x="571" y="383" width="1" height="2" fill="#fff"/><rect x="575" y="323" width="1" height="197" fill="#00f800"/><rect x="574" y="388" width="3" height="112" fill="#00f800"/><rect x="575" y="389" width="1" height="110" fill="#fff"/><rect x="579" y="497" width="1" height="186" fill="#00f800"/><rect x="578" y="498" width="3" height="141" fill="#00f800"/><rect x="579" y="499" width="1" height="139" fill="#fff"/><rect x="583" y="503" width="1" height="150" fill="#00f800"/><rect x="582" y="523" width="3" height="116" fill="#00f800"/><rect x="583" y="524" width="1" height="114" fill="#000"/><rect x="587" y="417" width="1" height="116" fill="#00f800"/><rect x="586" y="466" width="3" height="58" fill="#00f800"/><rect x="587" y="467" width="1" height="56" fill="#000"/><rect x="591" y="462" width="1" height="146" fill="#00f800"/><rect x="590" y="465" width="3" height="114" fill="#00f800"/><rect x="591" y="466" width="1" height="112" fill="#fff"/><rect x="595" y="452" width="1" height="174" fill="#00f800"/><rect x="594" y="457" width="3" height="122" fill="#00f800"/><rect x="595" y="458" width="1" height="120" fill="#000"/><rect x="599" y="223" width="1" height="264" fill="#00f800"/><rect x="598" y="326" width="3" height="132" fill="#00f800"/><rect x="599" y="327" width="1" height="130" fill="#000"/><rect x="603" y="295" width="1" height="128" fill="#00f800"/><rect x="602" y="326" width="3" height="34" fill="#00f800"/><rect x="603" y="327" width="1" height="32" fill="#fff"/><rect x="607" y="310" width="1" height="137" fill="#00f800"/><rect x="606" y="359" width="3" height="61" fill="#00f800"/><rect x="607" y="360" width="1" height="59" fill="#fff"/><rect x="611" y="280" width="1" height="163" fill="#00f800"/><rect x="610" y="409" width="3" height="11" fill="#00f800"/><rect x="611" y="410" width="1" height="9" fill="#000"/><rect x="615" y="373" width="1" height="124" fill="#00f800"/><rect x="614" y="409" width="3" height="86" fill="#00f800"/><rect x="615" y="410" width="1" height="84" fill="#fff"/><rect x="619" y="473" width="1" height="62" fill="#00f800"/><rect x="618" y="495" width="3" height="27" fill="#00f800"/><rect x="619" y="496" width="1" height="25" fill="#fff"/><rect x="623" y="517" width="1" height="109" fill="#00f800"/><rect x="622" y="521" width="3" height="98" fill="#00f800"/><rect x="623" y="522" width="1" height="96" fill="#fff"/><rect x="627" y="567" width="1" height="126" fill="#00f800"/><rect x="626" y="617" width="3" height="36" fill="#00f800"/><rect x="627" y="618" width="1" height="34" fill="#fff"/><rect x="631" y="540" width="1" height="142" fill="#00f800"/><rect x="630" y="541" width="3" height="113" fill="#00f800"/><rect x="631" y="542" width="1" height="111" fill="#000"/><rect x="635" y="532" width="1" height="94" fill="#00f800"/><rect x="634" y="542" width="3" height="52" fill="#00f800"/><rect x="635" y="543" width="1" height="50" fill="#fff"/><rect x="639" y="501" width="1" height="116" fill="#00f800"/><rect x="638" y="567" width="3" height="28" fill="#00f800"/><rect x="639" y="568" width="1" height="26" fill="#000"/><rect x="643" y="513" width="1" height="83" fill="#00f800"/><rect x="642" y="535" width="3" height="33" fill="#00f800"/><rect x="643" y="536" width="1" height="31" fill="#000"/><rect x="647" y="504" width="1" height="52" fill="#00f800"/><rect x="646" y="528" width="3" height="8" fill="#00f800"/><rect x="647" y="529" width="1" height="6" fill="#000"/><rect x="651" y="468" width="1" height="111" fill="#00f800"/><rect x="650" y="471" width="3" height="58" fill="#00f800"/><rect x="651" y="472" width="1" height="56" fill="#000"/><rect x="655" y="462" width="1" height="183" fill="#00f800"/><rect x="654" y="470" width="3" height="100" fill="#00f800"/><rect x="655" y="471" width="1" height="98" fill="#fff"/><rect x="659" y="512" width="1" height="81" fill="#00f800"/><rect x="658" y="534" width="3" height="36" fill="#00f800"/><rect x="659" y="535" width="1" height="34" fill="#000"/><rect x="663" y="526" width="1" height="94" fill="#00f800"/><rect x="662" y="534" width="3" height="26" fill="#00f800"/><rect x="663" y="535" width="1" height="24" fill="#fff"/><rect x="667" y="457" width="1" height="106" fill="#00f800"/><rect x="666" y="482" width="3" height="78" fill="#00f800"/><rect x="667" y="483" width="1" height="76" fill="#000"/><rect x="671" y="456" width="1" height="50" fill="#00f800"/><rect x="670" y="483" width="3" height="20" fill="#00f800"/><rect x="671" y="484" width="1" height="18" fill="#fff"/><rect x="675" y="464" width="1" height="51" fill="#00f800"/><rect x="674" y="484" width="3" height="19" fill="#00f800"/><rect x="675" y="485" width="1" height="17" fill="#000"/><rect x="679" y="482" width="1" height="49" fill="#00f800"/><rect x="678" y="484" width="3" height="29" fill="#00f800"/><rect x="679" y="485" width="1" height="27" fill="#fff"/><rect x="683" y="471" width="1" height="60" fill="#00f800"/><rect x="682" y="493" width="3" height="20" fill="#00f800"/><rect x="683" y="494" width="1" height="18" fill="#000"/><rect x="687" y="451" width="1" height="45" fill="#00f800"/><rect x="686" y="454" width="3" height="40" fill="#00f800"/><rect x="687" y="455" width="1" height="38" fill="#000"/><rect x="691" y="420" width="1" height="54" fill="#00f800"/><rect x="690" y="454" width="3" height="4" fill="#00f800"/><rect x="691" y="455" width="1" height="2" fill="#fff"/><rect x="695" y="454" width="1" height="39" fill="#00f800"/><rect x="694" y="456" width="3" height="9" fill="#00f800"/><rect x="695" y="457" width="1" height="7" fill="#fff"/><rect x="699" y="462" width="1" height="23" fill="#00f800"/><rect x="698" y="464" width="3" height="18" fill="#00f800"/><rect x="699" y="465" width="1" height="16" fill="#fff"/><rect x="703" y="472" width="1" height="46" fill="#00f800"/><rect x="702" y="481" width="3" height="36" fill="#00f800"/><rect x="703" y="482" width="1" height="34" fill="#fff"/><rect x="707" y="511" width="1" height="29" fill="#00f800"/><rect x="706" y="514" width="3" height="4" fill="#00f800"/><rect x="707" y="515" width="1" height="2" fill="#000"/><rect x="711" y="508" width="1" height="65" fill="#00f800"/><rect x="710" y="515" width="3" height="18" fill="#00f800"/><rect x="711" y="516" width="1" height="16" fill="#000"/><rect x="715" y="512" width="1" height="45" fill="#00f800"/><rect x="714" y="515" width="3" height="41" fill="#00f800"/><rect x="715" y="516" width="1" height="39" fill="#fff"/><rect x="719" y="539" width="1" height="23" fill="#00f800"/><rect x="718" y="554" width="3" height="3" fill="#00f800"/><rect x="719" y="555" width="1" height="1" fill="#fff"/><rect x="723" y="534" width="1" height="35" fill="#00f800"/><rect x="722" y="553" width="3" height="3" fill="#00f800"/><rect x="723" y="554" width="1" height="1" fill="#fff"/><rect x="727" y="531" width="1" height="48" fill="#00f800"/><rect x="726" y="553" width="3" height="15" fill="#00f800"/><rect x="727" y="554" width="1" height="13" fill="#fff"/><rect x="731" y="560" width="1" height="85" fill="#00f800"/><rect x="730" y="567" width="3" height="73" fill="#00f800"/><rect x="731" y="568" width="1" height="71" fill="#fff"/><rect x="735" y="633" width="1" height="73" fill="#00f800"/><rect x="734" y="640" width="3" height="65" fill="#00f800"/><rect x="735" y="641" width="1" height="63" fill="#fff"/><rect x="739" y="693" width="1" height="47" fill="#00f800"/><rect x="738" y="703" width="3" height="26" fill="#00f800"/><rect x="739" y="704" width="1" height="24" fill="#fff"/><rect x="743" y="689" width="1" height="58" fill="#00f800"/><rect x="742" y="723" width="3" height="6" fill="#00f800"/><rect x="743" y="724" width="1" height="4" fill="#000"/><rect x="747" y="722" width="1" height="62" fill="#00f800"/><rect x="746" y="723" width="3" height="60" fill="#00f800"/><rect x="747" y="724" width="1" height="58" fill="#fff"/><rect x="751" y="782" width="1" height="74" fill="#00f800"/><rect x="750" y="784" width="3" height="43" fill="#00f800"/><rect x="751" y="785" width="1" height="41" fill="#fff"/><rect x="755" y="795" width="1" height="49" fill="#00f800"/><rect x="754" y="797" width="3" height="30" fill="#00f800"/><rect x="755" y="798" width="1" height="28" fill="#000"/><rect x="759" y="796" width="1" height="115" fill="#00f800"/><rect x="758" y="798" width="3" height="112" fill="#00f800"/><rect x="759" y="799" width="1" height="110" fill="#fff"/><rect x="763" y="831" width="1" height="84" fill="#00f800"/><rect x="762" y="841" width="3" height="69" fill="#00f800"/><rect x="763" y="842" width="1" height="67" fill="#000"/><rect x="767" y="736" width="1" height="115" fill="#00f800"/><rect x="766" y="739" width="3" height="104" fill="#00f800"/><rect x="767" y="740" width="1" height="102" fill="#000"/><rect x="771" y="698" width="1" height="97" fill="#00f800"/><rect x="770" y="739" width="3" height="55" fill="#00f800"/><rect x="771" y="740" width="1" height="53" fill="#fff"/><rect x="775" y="746" width="1" height="62" fill="#00f800"/><rect x="774" y="758" width="3" height="36" fill="#00f800"/><rect x="775" y="759" width="1" height="34" fill="#000"/><rect x="779" y="691" width="1" height="93" fill="#00f800"/><rect x="778" y="697" width="3" height="62" fill="#00f800"/><rect x="779" y="698" width="1" height="60" fill="#000"/><rect x="783" y="657" width="1" height="72" fill="#00f800"/><rect x="782" y="681" width="3" height="17" fill="#00f800"/><rect x="783" y="682" width="1" height="15" fill="#000"/><rect x="787" y="678" width="1" height="92" fill="#00f800"/><rect x="786" y="681" width="3" height="60" fill="#00f800"/><rect x="787" y="682" width="1" height="58" fill="#fff"/><rect x="791" y="691" width="1" height="60" fill="#00f800"/><rect x="790" y="739" width="3" height="10" fill="#00f800"/><rect x="791" y="740" width="1" height="8" fill="#fff"/><rect x="795" y="744" width="1" height="93" fill="#00f800"/><rect x="794" y="748" width="3" height="88" fill="#00f800"/><rect x="795" y="749" width="1" height="86" fill="#fff"/><rect x="799" y="820" width="1" height="140" fill="#00f800"/><rect x="798" y="834" width="3" height="89" fill="#00f800"/><rect x="799" y="835" width="1" height="87" fill="#fff"/><rect x="803" y="894" width="1" height="64" fill="#00f800"/><rect x="802" y="906" width="3" height="17" fill="#00f800"/><rect x="803" y="907" width="1" height="15" fill="#000"/><rect x="807" y="876" width="1" height="68" fill="#00f800"/><rect x="806" y="906" width="3" height="23" fill="#00f800"/><rect x="807" y="907" width="1" height="21" fill="#fff"/><rect x="811" y="899" width="1" height="50" fill="#00f800"/><rect x="810" y="928" width="3" height="7" fill="#00f800"/><rect x="811" y="929" width="1" height="5" fill="#fff"/><rect x="815" y="911" width="1" height="30" fill="#00f800"/><rect x="814" y="911" width="3" height="22" fill="#00f800"/><rect x="815" y="912" width="1" height="20" fill="#000"/></svg>
<div class="pa" style="top:1px">1.34585</div>
<div class="pa" style="top:34px">1.34550</div>
<div class="pa" style="top:67px">1.34515</div>
<div class="pa" style="top:100px">1.34480</div>
<div class="pa" style="top:133px">1.34445</div>
<div class="pa" style="top:166px">1.34410</div>
<div class="pa" style="top:199px">1.34375</div>
<div class="pa" style="top:232px">1.34340</div>
<div class="pa" style="top:265px">1.34305</div>
<div class="pa" style="top:298px">1.34270</div>
<div class="pa" style="top:331px">1.34235</div>
<div class="pa" style="top:364px">1.34200</div>
<div class="pa" style="top:397px">1.34165</div>
<div class="pa" style="top:431px">1.34130</div>
<div class="pa" style="top:464px">1.34095</div>
<div class="pa" style="top:497px">1.34060</div>
<div class="pa" style="top:530px">1.34025</div>
<div class="pa" style="top:563px">1.33990</div>
<div class="pa" style="top:596px">1.33955</div>
<div class="pa" style="top:629px">1.33920</div>
<div class="pa" style="top:662px">1.33885</div>
<div class="pa" style="top:695px">1.33850</div>
<div class="pa" style="top:728px">1.33815</div>
<div class="pa" style="top:761px">1.33780</div>
<div class="pa" style="top:794px">1.33745</div>
<div class="pa" style="top:827px">1.33710</div>
<div class="pa" style="top:860px">1.33675</div>
<div class="a" style="left:608px;top:833px;width:54px;height:14px;background:#74889f"></div>
<div class="pa" style="top:834px;color:#000">1.33703</div>
<div class="ta" style="left:2px">11 Mar 2026</div>
<div class="ta" style="left:130px">11 Mar 08:15</div>
<div class="ta" style="left:258px">11 Mar 16:15</div>
<div class="ta" style="left:386px">12 Mar 00:15</div>
<div class="ct" style="left:61px;top:10px;font-size:11.400px;word-spacing:0;transform:scaleX(1.0032);transform-origin:0 0">GBPUSD, M15:  Great Britain Pound vs US Dollar</div>
<div class="ct" style="left:474.70000000000005px;top:10px;font-size:11.400px;word-spacing:0;transform:scaleX(1.0205);transform-origin:0 0">Grid Zone Pro MT5</div>
<svg class="a" style="left:0;top:0" width="675" height="40" viewBox="329 71 675 40"><path d="M810 74h11.500l-5.750 5.800z" fill="#8a9bb5"/><rect x="338" y="80.500" width="17.500" height="12" fill="#fff"/><path d="M346.750 80.500H337.800V92.500H346.750" fill="none" stroke="#d93a30" stroke-width="1.600"/><path d="M346.750 80.500H355.700V92.500H346.750" fill="none" stroke="#1a6fb5" stroke-width="1.600"/><path d="M339.500 83.300h6.500M339.500 86.500h6.500M339.500 89.700h6.500" stroke="#e25a50" stroke-width="1.500"/><path d="M347.500 83.300h6.500M347.500 86.500h6.500M347.500 89.700h6.500" stroke="#2e75b6" stroke-width="1.500"/><path d="M365 80.500h4.300v6h3.500v6h-7.800z" fill="#ffdcd6" stroke="#d93a30" stroke-width="1.300"/><path d="M382.300 80.500h-4.300v6h-3.500v6h7.800z" fill="#bfe0fb" stroke="#1a6fb5" stroke-width="1.300"/><rect x="370.200" y="79.600" width="6.600" height="3.800" rx="1.500" fill="#9a9a9a"/><rect x="371.800" y="81" width="3.400" height="1" fill="#fff"/><path d="M915.200 85.500v4.700q5.600 3.800 11.400 0v-4.700z" fill="#e2e2e2"/><path d="M912 84.200L920.600 79.600L930 84.200L920.600 88z" fill="#dcdcdc"/><path d="M913 84.500v7.500" stroke="#bdbdbd" stroke-width="1"/><circle cx="913.200" cy="93" r="1.700" fill="#cfcfcf"/></svg>
<div class="ct" style="left:7.300000000000011px;top:43px;transform:scaleX(0.9967);transform-origin:0 0">----------------------------------------------------------------</div>
<div class="ct" style="left:7.300000000000011px;top:57px;transform:scaleX(0.9564);transform-origin:0 0">Grid Zone Pro v18.15</div>
<div class="ct" style="left:7.300000000000011px;top:70px;transform:scaleX(0.9967);transform-origin:0 0">----------------------------------------------------------------</div>
<div class="ct" style="left:7.300000000000011px;top:85px;transform:scaleX(0.9835);transform-origin:0 0">Date: 2026.03.12  Time: 06:33</div>
<div class="ct" style="left:7.300000000000011px;top:99px;transform:scaleX(0.9543);transform-origin:0 0">Balance :  $189.96</div>
<div class="ct" style="left:7.300000000000011px;top:113px;transform:scaleX(0.9768);transform-origin:0 0">Equity :  $180.37</div>
<div class="ct" style="left:7.300000000000011px;top:127px;transform:scaleX(0.9479);transform-origin:0 0">Margin :  $2.33</div>
<div class="ct" style="left:7.300000000000011px;top:141px;transform:scaleX(0.9615);transform-origin:0 0">FreeMargin :  $178.04</div>
<div class="ct" style="left:7.300000000000011px;top:155px;transform:scaleX(0.9794);transform-origin:0 0">DD%Close :  %40.00</div>
<div class="ct" style="left:7.300000000000011px;top:169px;transform:scaleX(0.9877);transform-origin:0 0">DD%Current :  %5.05</div>
<div class="ct" style="left:7.300000000000011px;top:183px;transform:scaleX(0.9732);transform-origin:0 0">Grid_Sell_Zone (points) :  4987</div>
<div class="ct" style="left:7.300000000000011px;top:197px;transform:scaleX(0.9775);transform-origin:0 0">Grid_Buy_Zone (points) :  3822</div>
<div class="ct" style="left:7.300000000000011px;top:211px;transform:scaleX(0.9788);transform-origin:0 0">Grid_Step (points) :  87</div>
<div class="ct" style="left:7.300000000000011px;top:225px;transform:scaleX(1.0052);transform-origin:0 0">No News</div>
<div class="ct" style="left:7.300000000000011px;top:253px;transform:scaleX(0.9886);transform-origin:0 0">         |    Orders    |     Lots    |     Profits    |</div>
<div class="ct" style="left:7.300000000000011px;top:267px;transform:scaleX(1.0058);transform-origin:0 0">Buy           0             0.00          0.00</div>
<div class="ct" style="left:7.300000000000011px;top:281px;transform:scaleX(1.0028);transform-origin:0 0">Sell            0             0.00          0.00</div>
<div class="ct" style="left:7.300000000000011px;top:295px;transform:scaleX(1.0222);transform-origin:0 0">Total          0             0.00          0.00</div>
<div class="ct" style="left:7.300000000000011px;top:323px;transform:scaleX(1.0039);transform-origin:0 0">Today / Weekly(Profits)      -9.59 | 0.00</div>
<div class="ct" style="left:7.300000000000011px;top:351px;transform:scaleX(1.0023);transform-origin:0 0">StopLevel / Spread    0  |  2</div>
<div class="ct" style="left:7.300000000000011px;top:365px;transform:scaleX(1.0063);transform-origin:0 0">Swap Long / Short    -63.24  |  54.38</div>
<div class="ct" style="left:7.300000000000011px;top:379px;transform:scaleX(0.9822);transform-origin:0 0">Symbol / TF(Min)     GBPUSD  |  15</div>
<div class="ct" style="left:7.300000000000011px;top:393px;transform:scaleX(0.9793);transform-origin:0 0">Leverage                 1 : 500</div>
<div class="ct" style="left:7.300000000000011px;top:407px;transform:scaleX(0.9548);transform-origin:0 0">Name :  Paranchai Tensit</div>
<div class="ct" style="left:7.300000000000011px;top:421px;transform:scaleX(0.9481);transform-origin:0 0">Server :  ICMarketsSC-Demo</div>
<div class="ct" style="left:7.300000000000011px;top:435px;transform:scaleX(0.9613);transform-origin:0 0">Company :  Raw Trading Ltd</div>
<div class="ct" style="left:7.300000000000011px;top:448px;transform:scaleX(0.9967);transform-origin:0 0">----------------------------------------------------------------</div>
</div>
<div class="a" style="left:0;top:990px;width:325px;height:1px;background:#3c3c3c"></div>
<div class="a" style="left:3px;top:990px;width:82px;height:25px;background:#fff;border:1px solid #222;border-top:none"></div>
<div class="tab" style="left:15.2px;top:992px;color:#111;transform:scaleX(0.9716);transform-origin:0 0">Symbols</div>
<div class="tab" style="left:97.5px;top:992px;color:#8a8a8a;transform:scaleX(0.9900);transform-origin:0 0">Details</div>
<div class="tab" style="left:169.3px;top:992px;color:#8a8a8a;transform:scaleX(0.9759);transform-origin:0 0">Trading</div>
<div class="tab" style="left:244.8px;top:992px;color:#8a8a8a;transform:scaleX(0.9346);transform-origin:0 0">Ticks</div>
<div class="a" style="left:156px;top:994px;width:1px;height:19px;background:#8a8a8a"></div>
<div class="a" style="left:232px;top:994px;width:1px;height:19px;background:#8a8a8a"></div>
<div class="a" style="left:329px;top:995px;width:1px;height:24px;background:#a0a0a0"></div>
<div class="a" style="left:333px;top:994px;width:116px;height:24px;background:#fff;border:1px solid #222;border-top:none"></div>
<div class="tab" style="left:347px;top:997px;color:#111;transform:scaleX(0.9038);transform-origin:0 0">GBPUSD,M15</div>
<svg class="a" style="left:465px;top:997px" width="18" height="20" viewBox="0 0 18 20"><path d="M3 7.500h12l1 10.500h-14z" fill="#ffd400" stroke="#d9a514" stroke-width="1.100"/><path d="M6 9.500v-4a3 3 0 0 1 6 0v4" fill="none" stroke="#d9a514" stroke-width="1.200"/></svg>
<div class="tab" style="left:493.6px;top:997px;color:#8a8a8a;transform:scaleX(0.9903);transform-origin:0 0">Market</div>
<svg class="a" style="left:955px;top:1000px" width="40" height="14" viewBox="0 0 40 14"><path d="M8.500 3v7.500l-4.500-3.750zM30 3v7.500l4.500-3.750z" fill="#b4b4b4"/></svg>
<div class="a" style="left:0;top:1020px;width:1004px;height:1px;background:#a8a8a8"></div>
<div class="a" style="left:0;top:1021px;width:1004px;height:1px;background:#fff"></div>
<div class="a" style="left:241px;top:1024px;width:1px;height:23px;background:#9a9a9a"></div>
<div class="a" style="left:406px;top:1024px;width:1px;height:23px;background:#9a9a9a"></div>
<div class="a" style="left:531px;top:1024px;width:1px;height:23px;background:#9a9a9a"></div>
<div class="a" style="left:620px;top:1024px;width:1px;height:23px;background:#9a9a9a"></div>
<div class="a" style="left:709px;top:1024px;width:1px;height:23px;background:#9a9a9a"></div>
<div class="a" style="left:794px;top:1024px;width:1px;height:23px;background:#9a9a9a"></div>
<div class="a" style="left:881px;top:1024px;width:1px;height:23px;background:#9a9a9a"></div>
<div class="a" style="left:965px;top:1024px;width:1px;height:23px;background:#9a9a9a"></div>
<div class="tab" style="left:0px;top:1026px;color:#111;transform:scaleX(0.9258);transform-origin:0 0">For Help, press F1</div>
<div class="tab" style="left:248px;top:1026px;color:#111;transform:scaleX(1.0036);transform-origin:0 0">Default</div>
<div class="tab" style="left:412.5px;top:1026px;color:#111;transform:scaleX(0.9274);transform-origin:0 0">2026.03.12 06:30</div>
<div class="tab" style="left:536.8px;top:1026px;color:#111;transform:scaleX(0.9228);transform-origin:0 0">O: 1.33680</div>
<div class="tab" style="left:626.7px;top:1026px;color:#111;transform:scaleX(0.9279);transform-origin:0 0">H: 1.33703</div>
<div class="tab" style="left:716.3px;top:1026px;color:#111;transform:scaleX(0.8885);transform-origin:0 0">L: 1.33673</div>
<div class="tab" style="left:800px;top:1026px;color:#111;transform:scaleX(0.8993);transform-origin:0 0">C: 1.33703</div>
<div class="tab" style="left:997.5px;top:1026px;color:#111;transform:scaleX(0.9588);transform-origin:0 0">3</div>
<svg class="a" style="left:968px;top:1024px" width="36" height="25" viewBox="968 1024 36 25"><path d="M974 1042v-4M977.800 1042v-7M981.600 1042v-9" stroke="#22b532" stroke-width="2"/><path d="M985.400 1042v-11.500M989.200 1042v-14" stroke="#dcdcdc" stroke-width="1.800"/><g fill="#bdbdbd"><rect x="991" y="1044" width="3" height="3"/><rect x="995" y="1044" width="3" height="3"/><rect x="999" y="1044" width="3" height="3"/><rect x="995" y="1040" width="3" height="3"/><rect x="999" y="1040" width="3" height="3"/><rect x="999" y="1036" width="3" height="3"/></g></svg>
<div class="a" style="left:0;top:1048px;width:1004px;height:1px;background:#a8a8a8"></div>
</body></html>
